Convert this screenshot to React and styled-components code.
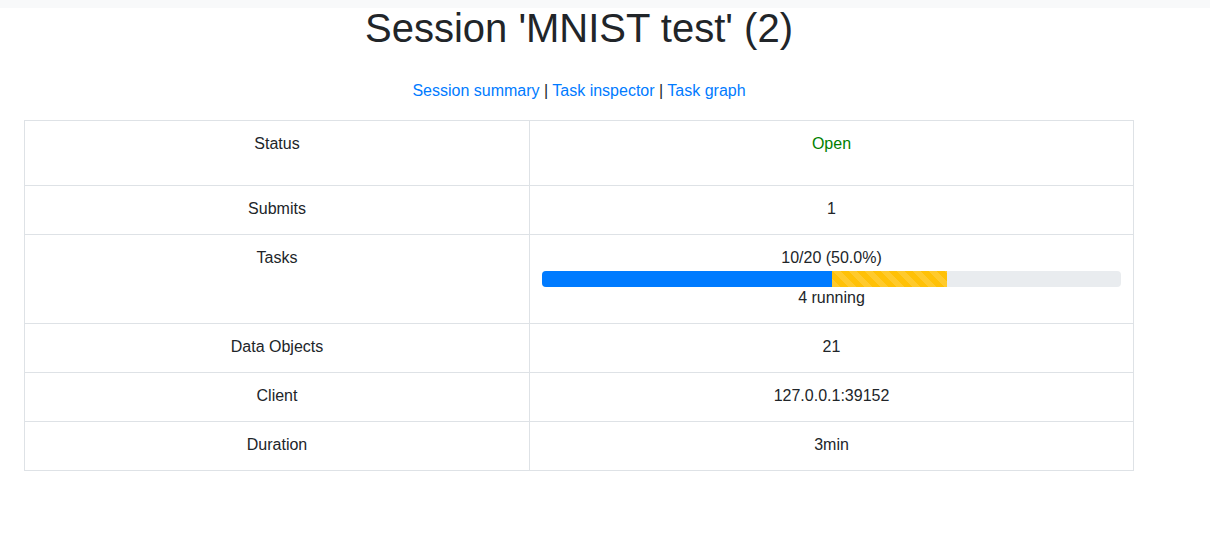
import React from 'react'
import styled, { createGlobalStyle } from 'styled-components'

const GlobalStyle = createGlobalStyle`
  body {
    margin: 0;
    font-family: "Liberation Sans", Arial, sans-serif;
    font-size: 16px;
    line-height: 1.5;
    color: #212529;
    background: #fff;
  }
`

const session = {
  name: 'MNIST test',
  id: 2,
  status: 'Open',
  submits: 1,
  finished: 10,
  running: 4,
  total: 20,
  dataObjects: 21,
  client: '127.0.0.1:39152',
  duration: '3min'
}

export default function App() {
  const done = (session.finished / session.total) * 100
  const running = (session.running / session.total) * 100

  return (
    <>
      <GlobalStyle />
      <TopBar />
      <Container>
        <Title>Session '{session.name}' ({session.id})</Title>
        <Nav>
          <Link href="#">Session summary</Link> | <Link href="#">Task inspector</Link> |{' '}
          <Link href="#">Task graph</Link>
        </Nav>
        <Table>
          <colgroup>
            <col style={{ width: 505 }} />
            <col />
          </colgroup>
          <tbody>
            <tr>
              <Cell>Status</Cell>
              <Cell>
                <Status>{session.status}</Status>
                <Spacer />
              </Cell>
            </tr>
            <tr>
              <Cell>Submits</Cell>
              <Cell>{session.submits}</Cell>
            </tr>
            <tr>
              <Cell>Tasks</Cell>
              <Cell>
                <div>
                  {session.finished}/{session.total} ({done.toFixed(1)}%)
                </div>
                <Progress>
                  <Bar style={{ width: `${done}%` }} />
                  <Bar striped style={{ width: `${running}%` }} />
                </Progress>
                <div>{session.running} running</div>
              </Cell>
            </tr>
            <tr>
              <Cell>Data Objects</Cell>
              <Cell>{session.dataObjects}</Cell>
            </tr>
            <tr>
              <Cell>Client</Cell>
              <Cell>{session.client}</Cell>
            </tr>
            <tr>
              <Cell>Duration</Cell>
              <Cell>{session.duration}</Cell>
            </tr>
          </tbody>
        </Table>
      </Container>
    </>
  )
}

const TopBar = styled.div`
  height: 8px;
  background: #f8f9fa;
`

const Container = styled.div`
  width: 1110px;
  padding-left: 24px;
`

const Title = styled.h1`
  margin: -4px 0 0;
  font-size: 40px;
  font-weight: 500;
  line-height: 1.2;
  text-align: center;
`

const Nav = styled.div`
  margin: 27px 0 17px;
  text-align: center;
`

const Link = styled.a`
  color: #007bff;
  text-decoration: none;
`

const Table = styled.table`
  width: 1110px;
  table-layout: fixed;
  border-collapse: collapse;
`

const Cell = styled.td`
  padding: 11px 12px 13px;
  border: 1px solid #dee2e6;
  text-align: center;
  vertical-align: top;
`

const Status = styled.div`
  color: green;
`

const Spacer = styled.div`
  height: 16px;
`

const Progress = styled.div`
  display: flex;
  height: 16px;
  overflow: hidden;
  border-radius: 4px;
  background: #e9ecef;
  margin-top: 1px;
  margin-bottom: -1px;
`

const Bar = styled.div`
  background-color: ${props => (props.striped ? '#ffc107' : '#007bff')};
  background-image: ${props =>
    props.striped
      ? 'linear-gradient(45deg, rgba(255,255,255,.15) 25%, transparent 25%, transparent 50%, rgba(255,255,255,.15) 50%, rgba(255,255,255,.15) 75%, transparent 75%, transparent)'
      : 'none'};
  background-size: 16px 16px;
`
